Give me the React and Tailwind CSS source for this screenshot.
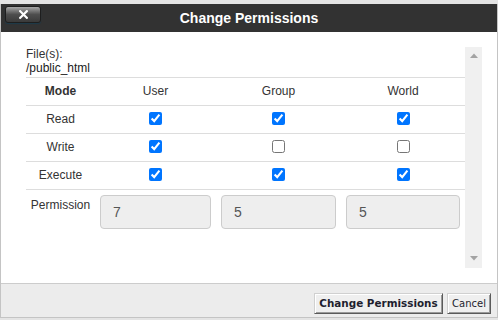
import React from "react";

const cols = "grid grid-cols-[69px_121px_125px_124px]";

function Check({ checked }) {
  return (
    <div className="flex items-center justify-center">
      <input type="checkbox" defaultChecked={checked} className="m-0 w-[13px] h-[13px]" />
    </div>
  );
}

function Row({ label, v }) {
  return (
    <div className={`${cols} h-[28px] border-t border-[#dddddd] items-center pb-[2px]`}>
      <div className="text-center text-[#333]">{label}</div>
      <Check checked={v[0]} />
      <Check checked={v[1]} />
      <Check checked={v[2]} />
    </div>
  );
}

function PermInput({ value }) {
  return (
    <div className="px-[5px]">
      <input
        readOnly
        value={value}
        className="w-full h-[34px] bg-[#eeeeee] border border-[#cccccc] rounded-[4px] pl-[12px] text-[14px] text-[#555] outline-none"
        style={{ fontFamily: '"Liberation Sans", Arial, sans-serif' }}
      />
    </div>
  );
}

export default function App() {
  return (
    <div
      className="w-[498px] h-[320px] bg-[#e4e4e4] pt-[4px] overflow-hidden"
      style={{ fontFamily: '"Liberation Sans", Arial, sans-serif' }}
    >
      <div className="w-[498px] flex flex-col border-r border-l border-b border-[#c4c4c4] bg-white">
        {/* Header */}
        <div className="relative h-[28px] bg-[#323232] flex items-center justify-center">
          <div className="absolute left-[4px] top-[2px] w-[36px] h-[17px] rounded-[3px] border border-[#1e1e1e] bg-gradient-to-b from-[#a8a8a8] via-[#4e4e4e] to-[#3a3a3a] shadow-[0_1px_1px_#1c3a4a] flex items-center justify-center">
            <svg width="9" height="9" viewBox="0 0 9 9">
              <path d="M1.2 1.2 L7.8 7.8 M7.8 1.2 L1.2 7.8" stroke="#fff" strokeWidth="2.2" strokeLinecap="square" />
            </svg>
          </div>
          <div className="text-white font-bold text-[14px] leading-none">Change Permissions</div>
        </div>

        {/* Body */}
        <div className="h-[251px] flex pl-[25px] pt-[15px] text-[12px] leading-[14px]">
          <div className="w-[439px]">
            <div className="text-[#333]">File(s):</div>
            <div className="text-[#1a1a1a] mb-[2px]">/public_html</div>
            <div className={`${cols} h-[28px] border-t border-[#dddddd] items-center text-[#333] pb-[1px]`}>
              <div className="text-center font-bold">Mode</div>
              <div className="text-center">User</div>
              <div className="text-center">Group</div>
              <div className="text-center">World</div>
            </div>
            <Row label="Read" v={[true, true, true]} />
            <Row label="Write" v={[true, false, false]} />
            <Row label="Execute" v={[true, true, true]} />
            <div className={`${cols} border-t border-[#dddddd] pt-[5px] items-start`}>
              <div className="text-center text-[#333] pt-[3px]">Permission</div>
              <PermInput value="7" />
              <PermInput value="5" />
              <PermInput value="5" />
            </div>
          </div>
          <div className="w-[17px] h-[221px] bg-[#f0f0f0] flex flex-col items-center justify-between pt-[6px] pb-[7px]">
            <svg width="8" height="5" viewBox="0 0 8 5"><path d="M0 5 L4 0.5 L8 5 Z" fill="#a3a3a3" /></svg>
            <svg width="8" height="5" viewBox="0 0 8 5"><path d="M0 0 L4 4.5 L8 0 Z" fill="#a3a3a3" /></svg>
          </div>
        </div>

        {/* Footer */}
        <div
          className="h-[34px] border-t border-[#cccccc] bg-[#ececec] flex justify-end items-start pt-[9px] pr-[6px] gap-[4px]"
          style={{ fontFamily: '"DejaVu Sans", Tahoma, sans-serif' }}
        >
          <button className="w-[129px] h-[21px] bg-[#efefef] border border-t-[#d0d0d0] border-l-[#d0d0d0] border-r-[#5a5a5a] border-b-[#5a5a5a] shadow-[inset_1px_1px_0_#ffffff,inset_-1px_-1px_0_#9a9a9a] text-[10.4px] font-bold text-[#1e1e2e] flex items-center justify-center">
            Change Permissions
          </button>
          <button className="w-[44px] h-[21px] bg-[#efefef] border border-t-[#d0d0d0] border-l-[#d0d0d0] border-r-[#5a5a5a] border-b-[#5a5a5a] shadow-[inset_1px_1px_0_#ffffff,inset_-1px_-1px_0_#9a9a9a] text-[10px] text-[#1e1e2e] flex items-center justify-center">
            Cancel
          </button>
        </div>
      </div>
    </div>
  );
}
